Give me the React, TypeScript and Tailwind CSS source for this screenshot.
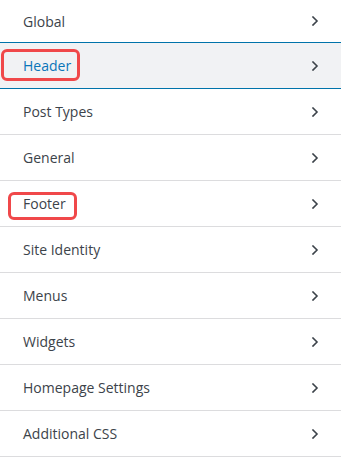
import React from "react";

const items = [
  "Post Types",
  "General",
  "Footer",
  "Site Identity",
  "Menus",
  "Widgets",
  "Homepage Settings",
  "Additional CSS",
];

function Chevron({ color }: { color: string }) {
  return (
    <svg width="8" height="10" viewBox="0 0 8 10" fill="none" className="shrink-0">
      <path d="M2 1 L6 5 L2 9" stroke={color} strokeWidth="1.6" strokeLinecap="square" />
    </svg>
  );
}

export default function App() {
  return (
    <div
      className="w-[341px] h-[464px] bg-white overflow-hidden"
      style={{ fontFamily: '"Open Sans", "Noto Sans", sans-serif' }}
    >
      <div className="flex h-[42px] items-center justify-between pl-[23px] pr-[22px] text-[14px] font-medium text-[#3c434a]">
        <span>Global</span>
        <Chevron color="#3c434a" />
      </div>
      <div className="relative flex h-[47px] items-center justify-between border-y border-[#0073aa] bg-[#f1f2f4] pl-[23px] pr-[22px] text-[14px] font-medium text-[#0a75b9]">
        <span>Header</span>
        <Chevron color="#3c434a" />
        <div className="absolute left-[1px] top-[6px] h-[32px] w-[79px] rounded-[6px] border-[3px] border-[#f0484a]" />
      </div>
      {items.map((t) => (
        <div
          key={t}
          className="relative flex h-[46px] items-center justify-between border-b border-[#dcdcde] pl-[23px] pr-[22px] text-[14px] font-medium text-[#3c434a]"
        >
          <span>{t}</span>
          <Chevron color="#3c434a" />
          {t === "Footer" && (
            <div className="absolute left-[8px] top-[11px] h-[28px] w-[69px] rounded-[6px] border-[3px] border-[#f0484a]" />
          )}
        </div>
      ))}
    </div>
  );
}
